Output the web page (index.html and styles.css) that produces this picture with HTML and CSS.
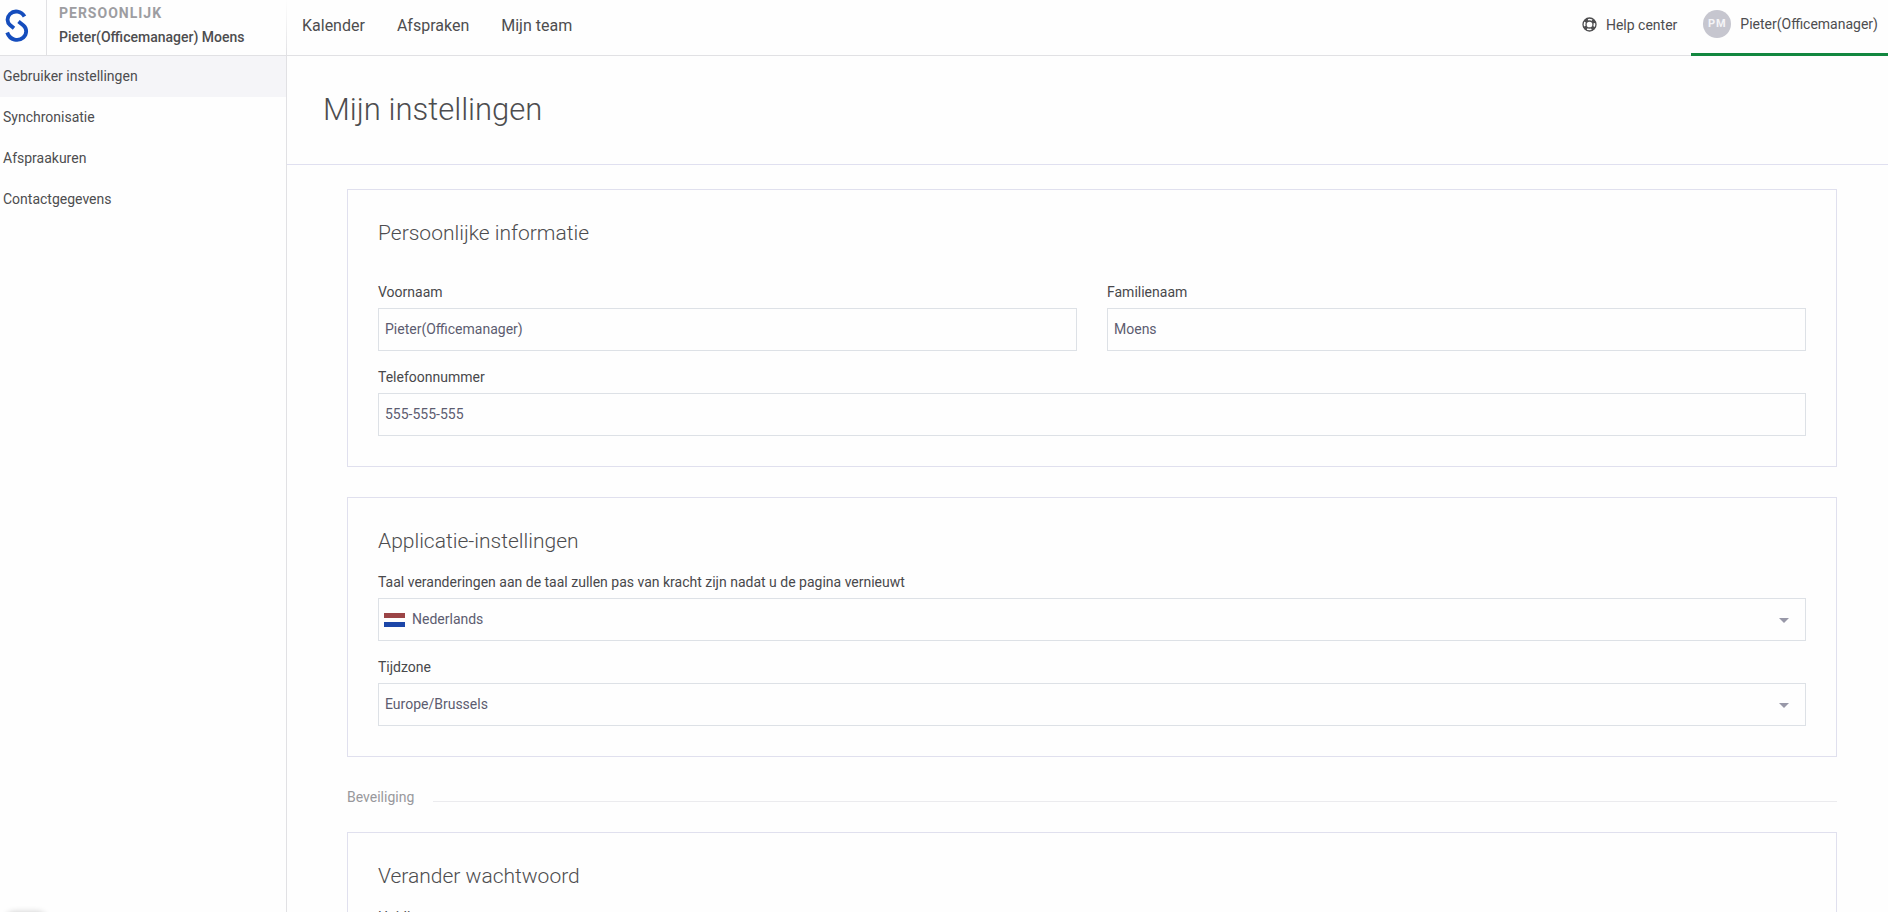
FILE: index.html
```html
<!DOCTYPE html>
<html lang="nl">
<head>
<meta charset="utf-8">
<title>Mijn instellingen</title>
<link rel="stylesheet" href="styles.css">
</head>
<body>
<header class="topbar">
  <div class="brand">
    <a class="logo" href="#" aria-label="Home">
      <svg width="26" height="34" viewBox="0 0 26 34" fill="none" stroke="#154dbd" stroke-width="3.800">
        <path d="M20.500 7.500C17.500 1.800 10 1 6 5C2.500 8.500 3 13.500 6 16L10 19.200"/>
        <path d="M3.200 23.500C6 31.500 14.500 32.600 19.300 28.500C23.200 25 23 19.500 19.500 16.500L14.500 12.500"/>
      </svg>
    </a>
    <div class="account">
      <span class="account-type">PERSOONLIJK</span>
      <span class="account-name">Pieter(Officemanager) Moens</span>
    </div>
  </div>
  <nav class="nav">
    <a href="#">Kalender</a>
    <a href="#">Afspraken</a>
    <a href="#">Mijn team</a>
  </nav>
  <a class="help" href="#">
    <svg width="15" height="15" viewBox="0 0 15 15" fill="none" stroke="#4d4d4f">
      <circle cx="7.500" cy="7.500" r="6.500" stroke-width="1.300"/>
      <circle cx="7.500" cy="7.500" r="3.500" stroke-width="1.300"/>
      <circle cx="7.500" cy="7.500" r="5.200" stroke-width="3" stroke-dasharray="3.600 4.568" stroke-dashoffset="-2.284"/>
    </svg>
    Help center
  </a>
  <button class="profile" type="button"><span class="avatar">PM</span>Pieter(Officemanager)</button>
</header>
<div class="layout">
  <nav class="sidebar">
    <a class="active" href="#">Gebruiker instellingen</a>
    <a href="#">Synchronisatie</a>
    <a href="#">Afspraakuren</a>
    <a href="#">Contactgegevens</a>
  </nav>
  <main class="main">
    <div class="page-head"><h1>Mijn instellingen</h1></div>
    <div class="content">
      <section class="card card-personal">
        <h2>Persoonlijke informatie</h2>
        <div class="fields">
          <div class="field">
            <label for="first">Voornaam</label>
            <input id="first" type="text" value="Pieter(Officemanager)">
          </div>
          <div class="field">
            <label for="last">Familienaam</label>
            <input id="last" type="text" value="Moens">
          </div>
          <div class="field wide">
            <label for="phone">Telefoonnummer</label>
            <input id="phone" type="text" value="555-555-555">
          </div>
        </div>
      </section>
      <section class="card">
        <h2>Applicatie-instellingen</h2>
        <div class="fields">
          <div class="field wide">
            <label for="lang">Taal veranderingen aan de taal zullen pas van kracht zijn nadat u de pagina vernieuwt</label>
            <div class="select">
              <select class="with-flag" id="lang"><option>Nederlands</option></select>
              <span class="flag"></span>
              <span class="caret"></span>
            </div>
          </div>
          <div class="field wide">
            <label for="zone">Tijdzone</label>
            <div class="select">
              <select id="zone"><option>Europe/Brussels</option></select>
              <span class="caret"></span>
            </div>
          </div>
        </div>
      </section>
      <h3 class="divider">Beveiliging</h3>
      <section class="card">
        <h2>Verander wachtwoord</h2>
        <div class="fields">
          <div class="field wide">
            <label for="pass">Huidig</label>
            <input id="pass" type="password">
          </div>
        </div>
      </section>
    </div>
  </main>
</div>
<div class="widget"></div>
</body>
</html>
```

FILE: styles.css
```css
* { box-sizing: border-box; }
body {
  margin: 0;
  height: 100vh;
  overflow: hidden;
  display: flex;
  flex-direction: column;
  background: #fefefe;
  color: #4d4d4f;
  font: 14px/20px Roboto, "Noto Sans", sans-serif;
}
a { color: inherit; text-decoration: none; }
h1, h2, h3 { margin: 0; font-weight: 300; }

.topbar {
  flex: none;
  display: flex;
  height: 56px;
  border-bottom: 1px solid #e1e1e4;
}
.brand {
  display: flex;
  width: 287px;
  border-right: 1px solid;
  border-image: linear-gradient(#fefefe, #e1e1e4) 1;
}
.logo {
  width: 47px;
  padding: 9px 0 0 4px;
  border-right: 1px solid #e1e1e4;
}
.account {
  display: flex;
  flex-direction: column;
  gap: 4px;
  padding: 3px 0 0 12px;
}
.account-type { color: #9d9da1; font-weight: 700; letter-spacing: 1px; }
.account-name { font-weight: 500; }
.nav {
  flex: 1;
  display: flex;
  gap: 32px;
  padding: 16px 15px;
  font-size: 16px;
}
.help { display: flex; align-items: center; gap: 9px; padding: 0 14px 6px 0; }
.profile {
  display: flex;
  align-items: center;
  gap: 9px;
  height: 56px;
  padding: 0 10px 5px 12px;
  border: 0;
  border-bottom: 3px solid #12873f;
  background: none;
  color: inherit;
  font: inherit;
}
.avatar {
  width: 28px;
  border-radius: 50%;
  background: #c6c6cf;
  color: #f4f4f7;
  font-size: 11px;
  font-weight: 700;
  line-height: 28px;
  letter-spacing: 1px;
  text-align: center;
}

.layout { flex: 1; display: flex; min-height: 0; }
.sidebar { flex: none; width: 287px; border-right: 1px solid #e1e1e4; }
.sidebar a { display: block; padding: 10px 3px 11px; }
.sidebar .active { background: #f5f5f8; }

.main { flex: 1; overflow: hidden; }
.page-head { padding: 32px 36px; border-bottom: 1px solid #e0e0f0; }
h1 { font-size: 31px; line-height: 44px; }
.content { padding: 24px 51px 0 60px; }
.card { margin-bottom: 30px; padding: 30px 30px 14px; border: 1px solid #e0e0ee; }
h2 { margin-bottom: 18px; font-size: 21px; line-height: 26px; }
.card-personal h2 { margin-bottom: 36px; }
.fields { display: grid; grid-template-columns: 1fr 1fr; column-gap: 30px; }
.wide { grid-column: span 2; }
.field { margin-bottom: 16px; }
.field label { display: block; margin-bottom: 6px; color: #48484b; }
.field input, .field select {
  display: block;
  width: 100%;
  height: 43px;
  padding: 0 6px 2px;
  border: 1px solid #dde1e6;
  border-radius: 0;
  background: none;
  color: #5c5c70;
  font: inherit;
}
.select { position: relative; }
.field select { appearance: none; }
.field .with-flag { padding-left: 33px; }
.flag {
  position: absolute;
  top: 15px;
  left: 6px;
  width: 21px;
  height: 14px;
  background: linear-gradient(#9b4446 0 5px, #fefefe 5px 9px, #1c46a8 9px);
}
.caret {
  position: absolute;
  top: 20px;
  right: 17px;
  border: 5px solid transparent;
  border-top-color: #9898a8;
  border-bottom: 0;
}
.divider {
  display: flex;
  align-items: center;
  gap: 19px;
  margin-bottom: 25px;
  color: #98989c;
  font-size: 14px;
  font-weight: 400;
  line-height: 20px;
}
.divider::after { content: ""; flex: 1; height: 1px; margin-top: 8px; background: #ebebee; }
.widget {
  position: absolute;
  bottom: -40px;
  left: 6px;
  width: 40px;
  height: 40px;
  border-radius: 8px;
  box-shadow: 0 0 6px rgba(0, 0, 0, .2);
}
```
